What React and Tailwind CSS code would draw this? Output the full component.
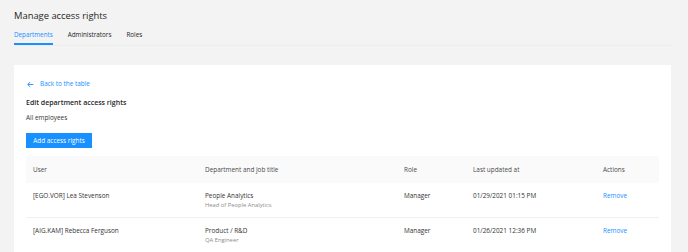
const ROWS = [
  {
    user: "[EGO.VOR] Lea Stevenson",
    dept: "People Analytics",
    title: "Head of People Analytics",
    role: "Manager",
    updated: "01/29/2021 01:15 PM",
  },
  {
    user: "[AIG.KAM] Rebecca Ferguson",
    dept: "Product / R&D",
    title: "QA Engineer",
    role: "Manager",
    updated: "01/26/2021 12:36 PM",
  },
];

const COLS = "grid grid-cols-[172px_199px_69px_130px_64px]";

export default function App() {
  return (
    <div className="h-[252px] w-[688px] overflow-hidden bg-[#f3f3f3] font-['Open_Sans',sans-serif] text-[#262626]">
      {/* Kopf */}
      <div className="px-[14px] pt-[8px]">
        <h1 className="text-[9.4px] leading-[16px] text-[#262626]">Manage access rights</h1>
        <nav className="mt-[6px] flex gap-[15px] border-b border-[#ededed] text-[6.3px] leading-[10px]">
          <span className="border-b-2 border-[#1890ff] pb-[3px] text-[#1890ff]">Departments</span>
          <span className="pb-[3px] text-[#262626]">Administrators</span>
          <span className="pb-[3px] text-[#262626]">Roles</span>
        </nav>
      </div>

      {/* Karte */}
      <div className="ml-[14px] mt-[19px] w-[657px] bg-white px-[12px] pt-[14px]">
        <a className="flex items-center gap-[6px] text-[6.4px] leading-[10px] text-[#1890ff]">
          <svg width="7" height="7" viewBox="0 0 10 10" fill="none" stroke="#1890ff" strokeWidth="1.3" className="ml-[1px]">
            <path d="M9 5H1.5M4.5 1.5L1 5l3.5 3.5" />
          </svg>
          Back to the table
        </a>
        <h2 className="mt-[9px] text-[7px] font-semibold leading-[10px] text-[#1f1f1f]">
          Edit department access rights
        </h2>
        <p className="mt-[5px] text-[6.4px] leading-[10px] text-[#333]">All employees</p>
        <button className="mt-[10px] h-[15px] w-[66px] bg-[#1890ff] text-[6.4px] leading-[15px] text-white">
          Add access rights
        </button>

        <div className="mt-[7px] text-[6.4px] leading-[10px]">
          <div className={`${COLS} h-[27px] items-center bg-[#fafafa] text-[#4a4a4a]`}>
            <div className="pl-[7px]">User</div>
            <div className="pl-[7px]">Department and job title</div>
            <div className="pl-[7px]">Role</div>
            <div className="pl-[7px]">Last updated at</div>
            <div className="pl-[7px]">Actions</div>
          </div>
          {ROWS.map((r, i) => (
            <div
              key={r.user}
              className={`${COLS} h-[35px] items-start pt-[8px] text-[#333] ${
                i < ROWS.length - 1 ? "border-b border-[#f0f0f0]" : ""
              }`}
            >
              <div className="pl-[7px]">{r.user}</div>
              <div className="pl-[7px]">
                <div>{r.dept}</div>
                <div className="text-[5.8px] leading-[9px] text-[#8c8c8c]">{r.title}</div>
              </div>
              <div className="pl-[7px]">{r.role}</div>
              <div className="pl-[7px]">{r.updated}</div>
              <div className="pl-[7px] text-[#1890ff]">Remove</div>
            </div>
          ))}
        </div>
      </div>
    </div>
  );
}
